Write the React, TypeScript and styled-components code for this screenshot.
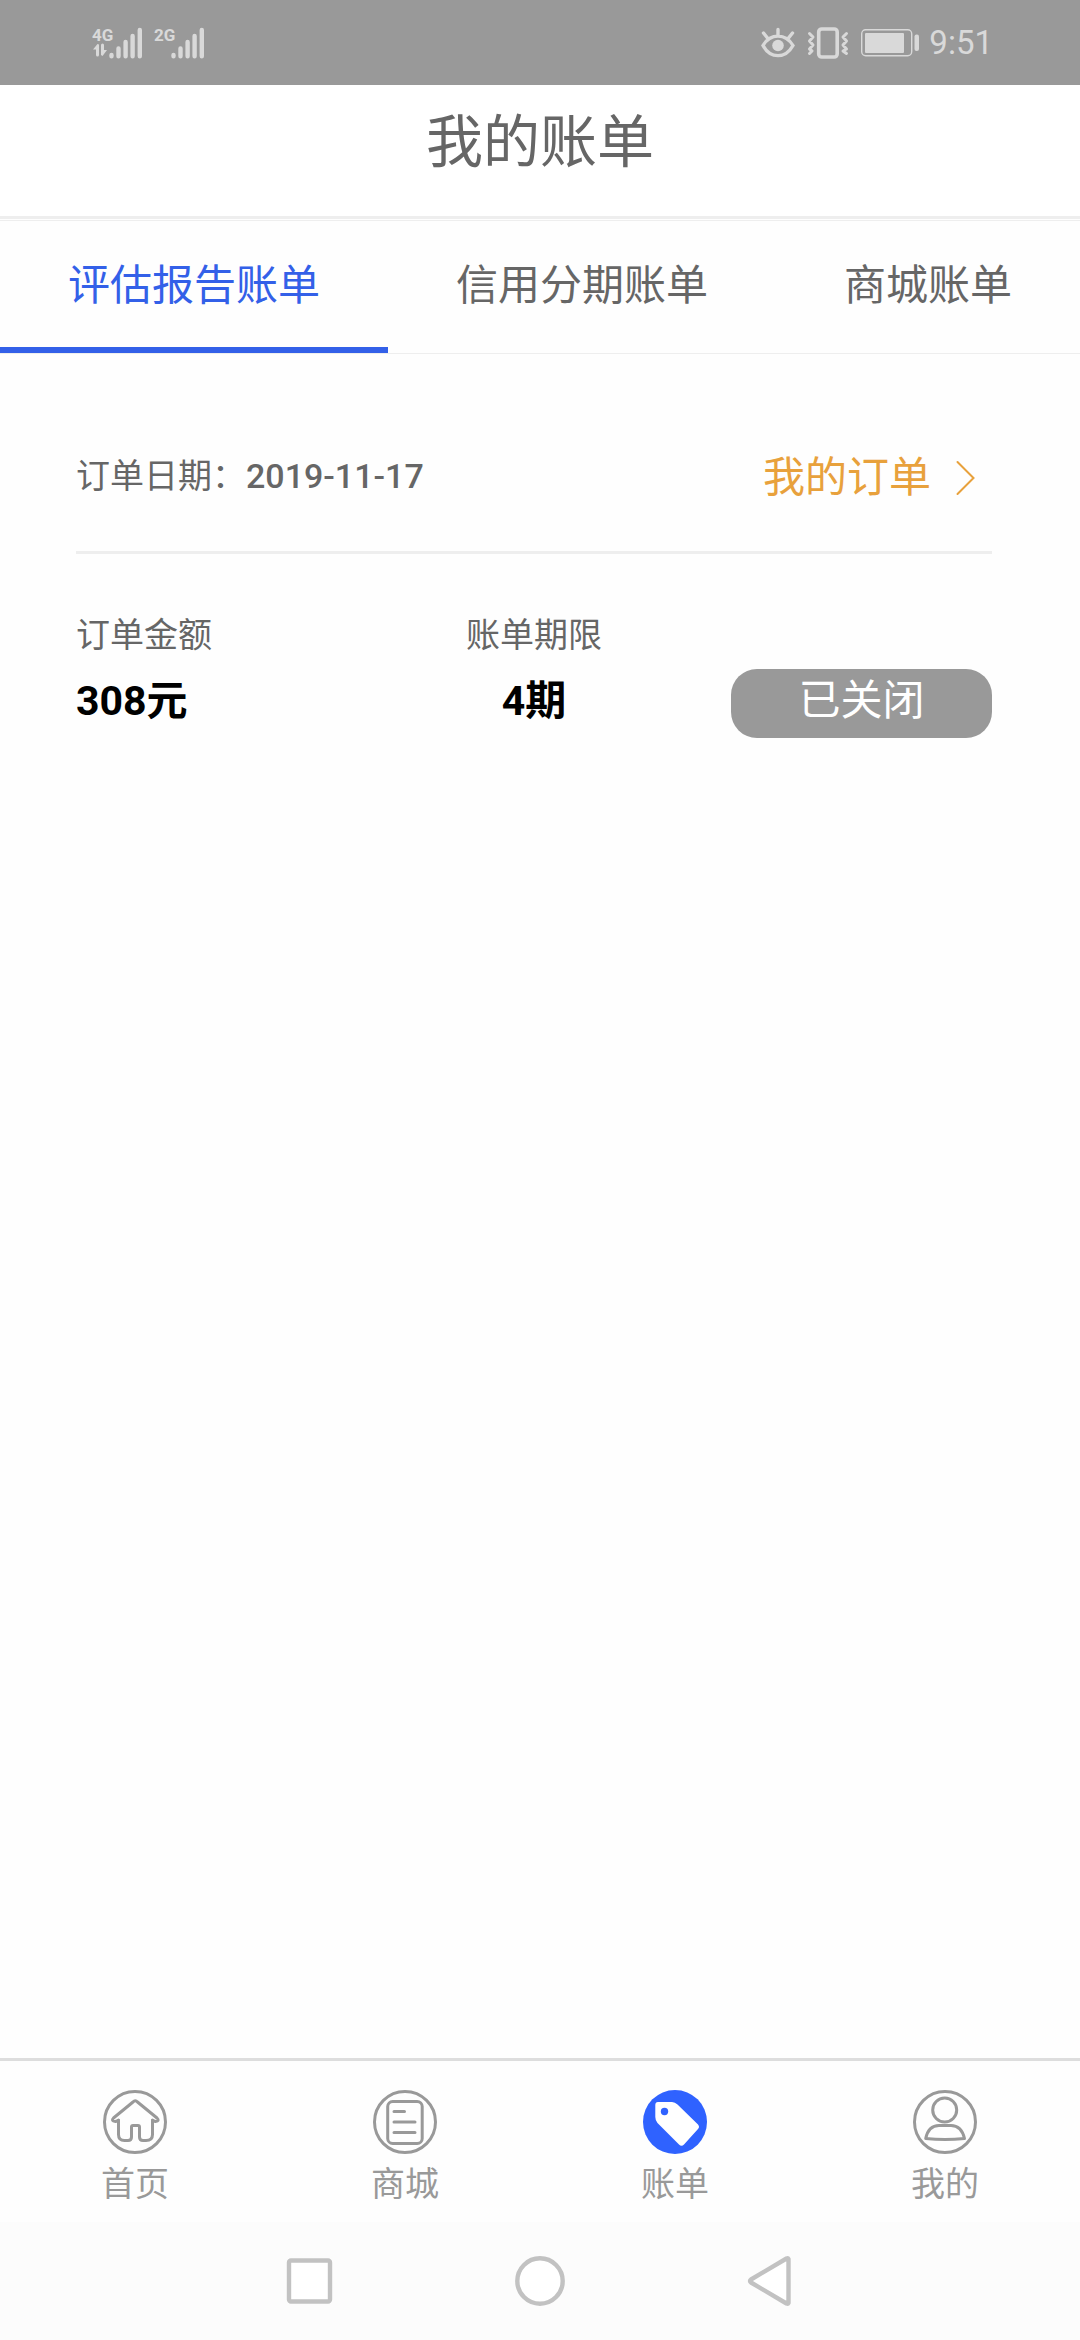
import React from "react";
import styled, { createGlobalStyle } from "styled-components";

const GlobalStyle = createGlobalStyle`
  * { box-sizing: border-box; }
  body {
    margin: 0;
    background: #fefefe;
    color: #666;
    font-family: Roboto, "Noto Sans CJK SC", sans-serif;
  }
  button { font: inherit; border: 0; padding: 0; background: none; }
  a { color: inherit; text-decoration: none; }
  svg { display: block; flex: none; }
`;

const Screen = styled.div`
  display: flex;
  flex-direction: column;
  min-height: 100vh;
`;

const StatusBar = styled.div`
  display: flex;
  align-items: center;
  justify-content: space-between;
  height: 85px;
  padding: 0 87px 0 92px;
  background: #999;
  color: #d9d9d9;
`;

const StatusGroup = styled.div<{ $gap: number }>`
  display: flex;
  align-items: center;
  gap: ${(p) => p.$gap}px;
`;

const Signal = styled.div`
  display: flex;
  align-items: flex-end;
`;

const Network = styled.div`
  display: flex;
  flex-direction: column;
  width: 17px;
  height: 32px;
  font: bold 17px/16px "Liberation Sans Narrow", Roboto, sans-serif;
  white-space: nowrap;
`;

const Clock = styled.time`
  margin-left: -2px;
  font-size: 33px;
  line-height: 40px;
`;

const Header = styled.header`
  padding: 19px 0 34px;
  border-bottom: 3px solid #eee;
  background: #fff;
`;

const Title = styled.h1`
  margin: 0;
  font-size: 57px;
  font-weight: 400;
  line-height: 78px;
  text-align: center;
`;

const Tabs = styled.nav`
  display: flex;
  margin-top: 1px;
  border-top: 1px solid #eee;
  border-bottom: 1px solid #eee;
`;

const Tab = styled.button<{ $active?: boolean }>`
  flex: 1 0 auto;
  padding: 35px 68px 31px;
  border-bottom: 6px solid ${(p) => (p.$active ? "#3360e8" : "transparent")};
  color: ${(p) => (p.$active ? "#3360e8" : "#666")};
  font-size: 42px;
  line-height: 60px;
  white-space: nowrap;
`;

const Main = styled.main`
  flex: 1;
  padding: 94px 88px 0 76px;
`;

const OrderHead = styled.div`
  display: flex;
  align-items: center;
  justify-content: space-between;
  padding-bottom: 43px;
  border-bottom: 3px solid #eee;
`;

const OrderDate = styled.div`
  padding-bottom: 4px;
  font-size: 34px;
  line-height: 56px;
`;

const DateValue = styled.time`
  font-weight: 500;
`;

const OrdersLink = styled.a`
  display: flex;
  align-items: center;
  gap: 24px;
  padding-right: 16px;
  color: #e8a13c;
  font-size: 42px;
  line-height: 60px;
`;

const OrderBody = styled.div`
  display: grid;
  grid-template-columns: repeat(3, 1fr);
  align-items: end;
  padding-top: 56px;
`;

const Field = styled.dl<{ $center?: boolean }>`
  margin: 0;
  text-align: ${(p) => (p.$center ? "center" : "left")};
`;

const FieldLabel = styled.dt`
  font-size: 34px;
  line-height: 50px;
`;

const FieldValue = styled.dd`
  margin: 0;
  padding: 11px 0 7px;
  color: #000;
  font-size: 41px;
  font-weight: 700;
  line-height: 60px;
`;

const StateButton = styled.button`
  justify-self: end;
  width: 261px;
  padding-bottom: 5px;
  border-radius: 26px;
  background: #999;
  color: #fff;
  font-size: 42px;
  line-height: 64px;
`;

const BottomNav = styled.nav`
  display: flex;
  border-top: 3px solid #ddd;
`;

const NavItem = styled.a`
  display: flex;
  flex: 1;
  flex-direction: column;
  align-items: center;
  padding: 29px 0 13px;
  color: #999;
  font-size: 34px;
  line-height: 50px;
  gap: 5px;
`;

const SystemBar = styled.div`
  display: flex;
  align-items: center;
  justify-content: center;
  gap: 180px;
  height: 118px;
  background: #fcfcfc;
`;

const Bars = () => (
  <svg width="34" height="32" viewBox="0 0 34 32" stroke="#d9d9d9" strokeWidth="4.4" strokeLinecap="round" aria-hidden="true">
    <path d="M2.5 28v1.2M9.5 21.5v7.7M16.6 15v14.2M23.6 9v20.2M30.8 3v26.2" />
  </svg>
);

const DataArrows = () => (
  <svg width="17" height="14" viewBox="0 0 17 14" fill="#d9d9d9" aria-hidden="true">
    <path d="M7 1.500v10.500a1.300 1.300 0 0 1-3 0V6.500H1L5.500 1zM9 12V2a1.300 1.300 0 0 1 3 0v5h3L10.500 13z" />
  </svg>
);

const EyeIcon = () => (
  <svg width="34" height="32" viewBox="0 0 34 32" fill="none" stroke="#d9d9d9" strokeWidth="3.4" strokeLinecap="round" aria-hidden="true">
    <path d="M2 18.500C9.500 6 24.500 6 32 18.500C24.500 32 9.500 32 2 18.500zM17 8V2.500M6.500 11L2.500 6M27.500 11L31.500 6" />
    <circle cx="17" cy="18.500" r="5.800" fill="#d9d9d9" stroke="none" />
  </svg>
);

const VibrateIcon = () => (
  <svg width="42" height="32" viewBox="0 0 42 32" fill="none" stroke="#d9d9d9" strokeWidth="3" strokeLinecap="round" strokeLinejoin="round" aria-hidden="true">
    <rect x="11.700" y="2" width="18.500" height="28" rx="3" strokeWidth="3.600" />
    <path d="M2.500 6.500L6 10L2.500 14L6 18L2.500 22L5 24L2.500 26.500M39.500 6.500L36 10L39.500 14L36 18L39.500 22L36 24L39.500 26.500" />
  </svg>
);

const BatteryIcon = () => (
  <svg width="58" height="28" viewBox="0 0 58 28" aria-hidden="true">
    <rect x="0.700" y="0.700" width="50" height="26" rx="4" fill="none" stroke="#d9d9d9" strokeWidth="1.400" />
    <rect x="4" y="4" width="39" height="20" rx="1" fill="#d9d9d9" />
    <rect x="53.500" y="5.500" width="4.500" height="16.500" rx="2" fill="#d9d9d9" />
  </svg>
);

const ChevronIcon = () => (
  <svg width="21" height="36" viewBox="0 0 21 36" fill="none" stroke="#e8a13c" strokeWidth="2" strokeLinecap="round" aria-hidden="true">
    <path d="M2.500 2L18.500 18L2.500 34" />
  </svg>
);

const NavIcon = ({ children }: { children: React.ReactNode }) => (
  <svg width="64" height="64" viewBox="0 0 64 64" fill="none" stroke="#999" strokeWidth="3" strokeLinecap="round" strokeLinejoin="round" aria-hidden="true">
    <circle cx="32" cy="32" r="30.500" />
    {children}
  </svg>
);

const HomeIcon = () => (
  <NavIcon>
    <path d="M15.500 30V44.500Q15.500 50.500 21.500 50.500H25Q28.500 50.500 28.500 47V37Q28.500 35.500 30 35.500H35Q36.500 35.500 36.500 37V47Q36.500 50.500 40 50.500H43Q49.500 50.500 49.500 44.500V30" />
    <path d="M15.500 30.500L12.500 31.500Q7.500 31 10.500 28L30 12Q32.300 9.500 34.500 12L54 28Q57 31 52.500 31.500L49.500 30.500" />
  </NavIcon>
);

const MallIcon = () => (
  <NavIcon>
    <rect x="14.700" y="11.500" width="34.500" height="42" rx="5" />
    <path d="M21 21.500H31.500M21 32H42M21 42.500H42" />
  </NavIcon>
);

const BillIcon = () => (
  <svg width="64" height="64" viewBox="0 0 64 64" aria-hidden="true">
    <circle cx="32" cy="32" r="32" fill="#2f62ff" />
    <path d="M15 12H29Q32 12 34.500 14.500L55 34.500Q57 36.800 55 39L41 54.500Q38.500 57 36 54.500L14.500 33Q12.300 30.500 12.300 27V15Q12.300 12 15 12z" fill="#fff" />
    <circle cx="21.500" cy="21.500" r="3.700" fill="#2f62ff" />
  </svg>
);

const UserIcon = () => (
  <NavIcon>
    <circle cx="31.700" cy="20" r="12" />
    <path d="M12.700 48.500C14.500 40 19 35.500 26 35.500H38C45 35.500 49.500 40 51.500 48.500Q32 50.500 12.700 48.500z" />
  </NavIcon>
);

const navItems = [
  { label: "首页", icon: <HomeIcon /> },
  { label: "商城", icon: <MallIcon /> },
  { label: "账单", icon: <BillIcon /> },
  { label: "我的", icon: <UserIcon /> },
];

const tabs = ["评估报告账单", "信用分期账单", "商城账单"];

export default function App() {
  return (
    <Screen>
      <GlobalStyle />
      <StatusBar>
        <StatusGroup $gap={11}>
          <Signal>
            <Network>
              <span>4G</span>
              <DataArrows />
            </Network>
            <Bars />
          </Signal>
          <Signal>
            <Network>
              <span>2G</span>
            </Network>
            <Bars />
          </Signal>
        </StatusGroup>
        <StatusGroup $gap={12}>
          <EyeIcon />
          <VibrateIcon />
          <BatteryIcon />
          <Clock>9:51</Clock>
        </StatusGroup>
      </StatusBar>
      <Header>
        <Title>我的账单</Title>
      </Header>
      <Tabs>
        {tabs.map((label, i) => (
          <Tab key={label} type="button" $active={i === 0}>
            {label}
          </Tab>
        ))}
      </Tabs>
      <Main>
        <OrderHead>
          <OrderDate>
            订单日期：<DateValue>2019-11-17</DateValue>
          </OrderDate>
          <OrdersLink href="#orders">
            我的订单
            <ChevronIcon />
          </OrdersLink>
        </OrderHead>
        <OrderBody>
          <Field>
            <FieldLabel>订单金额</FieldLabel>
            <FieldValue>308元</FieldValue>
          </Field>
          <Field $center>
            <FieldLabel>账单期限</FieldLabel>
            <FieldValue>4期</FieldValue>
          </Field>
          <StateButton type="button">已关闭</StateButton>
        </OrderBody>
      </Main>
      <BottomNav>
        {navItems.map((item) => (
          <NavItem key={item.label} href="#">
            {item.icon}
            {item.label}
          </NavItem>
        ))}
      </BottomNav>
      <SystemBar>
        <button type="button" aria-label="Recent apps">
          <svg width="50" height="50" viewBox="0 0 50 50" fill="#fff" stroke="#c2c2c2" strokeWidth="4.400">
            <rect x="4" y="4.500" width="41" height="41" rx="2" />
          </svg>
        </button>
        <button type="button" aria-label="Home">
          <svg width="50" height="50" viewBox="0 0 50 50" fill="#fff" stroke="#c2c2c2" strokeWidth="4.400">
            <circle cx="25" cy="25" r="22.700" />
          </svg>
        </button>
        <button type="button" aria-label="Back">
          <svg width="50" height="50" viewBox="0 0 50 50" fill="#fff" stroke="#c2c2c2" strokeWidth="4.400" strokeLinejoin="round">
            <path d="M43.500 3V47Q43 48 41.500 47.500L6 26.500Q4 25 6 23.500L41.500 2.500Q43 2 43.500 3z" />
          </svg>
        </button>
      </SystemBar>
    </Screen>
  );
}
